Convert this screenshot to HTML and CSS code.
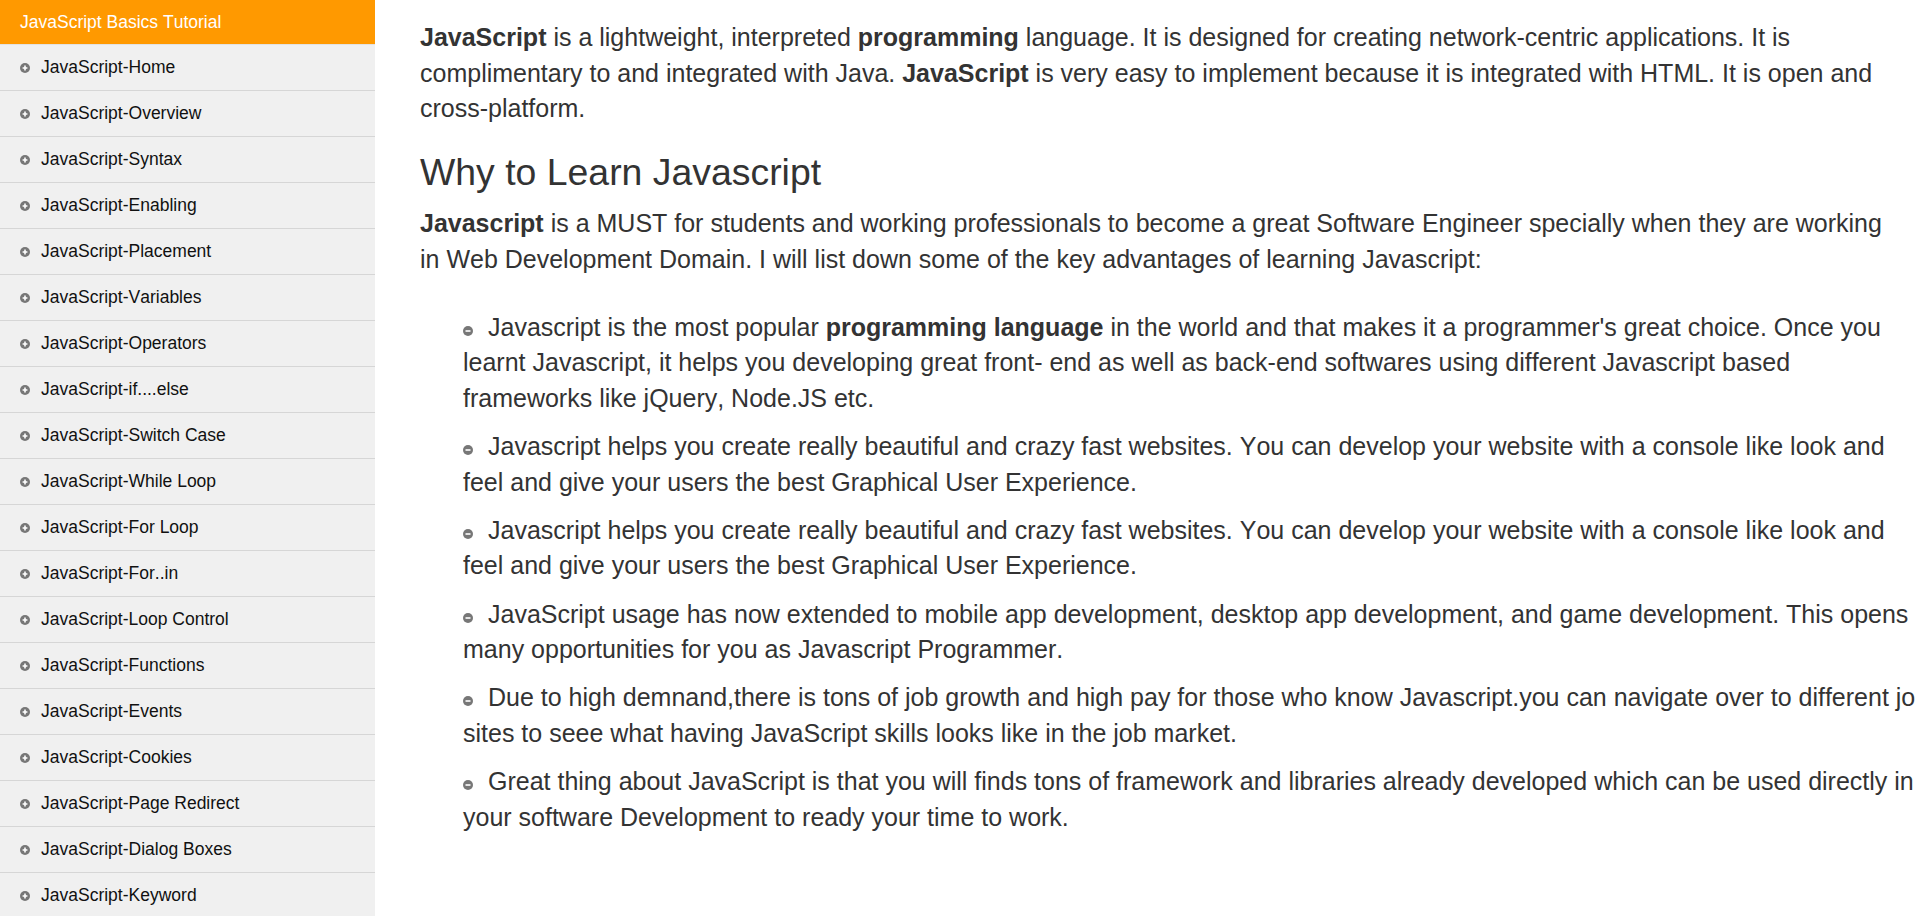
FILE: index.html
```html
<!DOCTYPE html>
<html lang="en">
<head>
<meta charset="utf-8">
<title>JavaScript Basics Tutorial</title>
<link rel="stylesheet" href="styles.css">
</head>
<body>
<aside class="sidebar">
  <div class="sidebar-title">JavaScript Basics Tutorial</div>
  <ul class="nav">
    <li class="nav-item"><svg class="nav-icon" viewBox="0 0 10 10"><circle cx="5" cy="5" r="5" fill="#777"/><path d="M2.6 5h4.8M5 2.6v4.8" stroke="#fff" stroke-width="1.6"/></svg>JavaScript-Home</li>
    <li class="nav-item"><svg class="nav-icon" viewBox="0 0 10 10"><circle cx="5" cy="5" r="5" fill="#777"/><path d="M2.6 5h4.8M5 2.6v4.8" stroke="#fff" stroke-width="1.6"/></svg>JavaScript-Overview</li>
    <li class="nav-item"><svg class="nav-icon" viewBox="0 0 10 10"><circle cx="5" cy="5" r="5" fill="#777"/><path d="M2.6 5h4.8M5 2.6v4.8" stroke="#fff" stroke-width="1.6"/></svg>JavaScript-Syntax</li>
    <li class="nav-item"><svg class="nav-icon" viewBox="0 0 10 10"><circle cx="5" cy="5" r="5" fill="#777"/><path d="M2.6 5h4.8M5 2.6v4.8" stroke="#fff" stroke-width="1.6"/></svg>JavaScript-Enabling</li>
    <li class="nav-item"><svg class="nav-icon" viewBox="0 0 10 10"><circle cx="5" cy="5" r="5" fill="#777"/><path d="M2.6 5h4.8M5 2.6v4.8" stroke="#fff" stroke-width="1.6"/></svg>JavaScript-Placement</li>
    <li class="nav-item"><svg class="nav-icon" viewBox="0 0 10 10"><circle cx="5" cy="5" r="5" fill="#777"/><path d="M2.6 5h4.8M5 2.6v4.8" stroke="#fff" stroke-width="1.6"/></svg>JavaScript-Variables</li>
    <li class="nav-item"><svg class="nav-icon" viewBox="0 0 10 10"><circle cx="5" cy="5" r="5" fill="#777"/><path d="M2.6 5h4.8M5 2.6v4.8" stroke="#fff" stroke-width="1.6"/></svg>JavaScript-Operators</li>
    <li class="nav-item"><svg class="nav-icon" viewBox="0 0 10 10"><circle cx="5" cy="5" r="5" fill="#777"/><path d="M2.6 5h4.8M5 2.6v4.8" stroke="#fff" stroke-width="1.6"/></svg>JavaScript-if....else</li>
    <li class="nav-item"><svg class="nav-icon" viewBox="0 0 10 10"><circle cx="5" cy="5" r="5" fill="#777"/><path d="M2.6 5h4.8M5 2.6v4.8" stroke="#fff" stroke-width="1.6"/></svg>JavaScript-Switch Case</li>
    <li class="nav-item"><svg class="nav-icon" viewBox="0 0 10 10"><circle cx="5" cy="5" r="5" fill="#777"/><path d="M2.6 5h4.8M5 2.6v4.8" stroke="#fff" stroke-width="1.6"/></svg>JavaScript-While Loop</li>
    <li class="nav-item"><svg class="nav-icon" viewBox="0 0 10 10"><circle cx="5" cy="5" r="5" fill="#777"/><path d="M2.6 5h4.8M5 2.6v4.8" stroke="#fff" stroke-width="1.6"/></svg>JavaScript-For Loop</li>
    <li class="nav-item"><svg class="nav-icon" viewBox="0 0 10 10"><circle cx="5" cy="5" r="5" fill="#777"/><path d="M2.6 5h4.8M5 2.6v4.8" stroke="#fff" stroke-width="1.6"/></svg>JavaScript-For..in</li>
    <li class="nav-item"><svg class="nav-icon" viewBox="0 0 10 10"><circle cx="5" cy="5" r="5" fill="#777"/><path d="M2.6 5h4.8M5 2.6v4.8" stroke="#fff" stroke-width="1.6"/></svg>JavaScript-Loop Control</li>
    <li class="nav-item"><svg class="nav-icon" viewBox="0 0 10 10"><circle cx="5" cy="5" r="5" fill="#777"/><path d="M2.6 5h4.8M5 2.6v4.8" stroke="#fff" stroke-width="1.6"/></svg>JavaScript-Functions</li>
    <li class="nav-item"><svg class="nav-icon" viewBox="0 0 10 10"><circle cx="5" cy="5" r="5" fill="#777"/><path d="M2.6 5h4.8M5 2.6v4.8" stroke="#fff" stroke-width="1.6"/></svg>JavaScript-Events</li>
    <li class="nav-item"><svg class="nav-icon" viewBox="0 0 10 10"><circle cx="5" cy="5" r="5" fill="#777"/><path d="M2.6 5h4.8M5 2.6v4.8" stroke="#fff" stroke-width="1.6"/></svg>JavaScript-Cookies</li>
    <li class="nav-item"><svg class="nav-icon" viewBox="0 0 10 10"><circle cx="5" cy="5" r="5" fill="#777"/><path d="M2.6 5h4.8M5 2.6v4.8" stroke="#fff" stroke-width="1.6"/></svg>JavaScript-Page Redirect</li>
    <li class="nav-item"><svg class="nav-icon" viewBox="0 0 10 10"><circle cx="5" cy="5" r="5" fill="#777"/><path d="M2.6 5h4.8M5 2.6v4.8" stroke="#fff" stroke-width="1.6"/></svg>JavaScript-Dialog Boxes</li>
    <li class="nav-item"><svg class="nav-icon" viewBox="0 0 10 10"><circle cx="5" cy="5" r="5" fill="#777"/><path d="M2.6 5h4.8M5 2.6v4.8" stroke="#fff" stroke-width="1.6"/></svg>JavaScript-Keyword</li>
  </ul>
</aside>
<main class="content">
  <p class="intro"><b>JavaScript</b> is a lightweight, interpreted <b>programming</b> language. It is designed for creating network-centric applications. It is complimentary to and integrated with Java. <b>JavaScript</b> is very easy to implement because it is integrated with HTML. It is open and <span class="nowrap">cross-platform.</span></p>
  <h2 class="section-title">Why to Learn Javascript</h2>
  <p><b>Javascript</b> is a MUST for students and working professionals to become a great Software Engineer specially when they are working in Web Development Domain. I will list down some of the key advantages of learning Javascript:</p>
  <ul class="features">
    <li class="feature-first"><svg class="bullet" viewBox="0 0 10 10"><circle cx="5" cy="5" r="5" fill="#777"/><path d="M2.5 5h5" stroke="#fff" stroke-width="1.6"/></svg>Javascript is the most popular <b>programming language</b> in the world and that makes it a programmer's great choice. Once you learnt Javascript, it helps you developing great front- end as well as <span class="nowrap">back-end</span> softwares using different Javascript based frameworks like jQuery, Node.JS etc.</li>
    <li><svg class="bullet" viewBox="0 0 10 10"><circle cx="5" cy="5" r="5" fill="#777"/><path d="M2.5 5h5" stroke="#fff" stroke-width="1.6"/></svg>Javascript helps you create really beautiful and crazy fast websites. You can develop your website with a console like look and feel and give your users the best Graphical User Experience.</li>
    <li><svg class="bullet" viewBox="0 0 10 10"><circle cx="5" cy="5" r="5" fill="#777"/><path d="M2.5 5h5" stroke="#fff" stroke-width="1.6"/></svg>Javascript helps you create really beautiful and crazy fast websites. You can develop your website with a console like look and feel and give your users the best Graphical User Experience.</li>
    <li><svg class="bullet" viewBox="0 0 10 10"><circle cx="5" cy="5" r="5" fill="#777"/><path d="M2.5 5h5" stroke="#fff" stroke-width="1.6"/></svg>JavaScript usage has now extended to mobile app development, desktop app development, and game development. This opens many opportunities for you as Javascript Programmer.</li>
    <li><svg class="bullet" viewBox="0 0 10 10"><circle cx="5" cy="5" r="5" fill="#777"/><path d="M2.5 5h5" stroke="#fff" stroke-width="1.6"/></svg>Due to high demnand,there is tons of job growth and high pay for those who know Javascript.you can navigate over to different job sites to seee what having JavaScript skills looks like in the job market.</li>
    <li><svg class="bullet" viewBox="0 0 10 10"><circle cx="5" cy="5" r="5" fill="#777"/><path d="M2.5 5h5" stroke="#fff" stroke-width="1.6"/></svg>Great thing about JavaScript is that you will finds tons of framework and libraries already developed which can be used directly in your software Development to ready your time to work.</li>
  </ul>
</main>
</body>
</html>
```

FILE: styles.css
```css
html {
  overflow: hidden;
}

body {
  margin: 0;
  font-family: "Liberation Sans", Arial, sans-serif;
  font-kerning: none;
  display: flex;
  align-items: flex-start;
  background: #fff;
}

.sidebar {
  flex: none;
  width: 375px;
  background: #f0f0f0;
}

.sidebar-title {
  height: 44px;
  display: flex;
  align-items: center;
  padding-left: 20px;
  background: #ff9900;
  color: #fff;
  font-size: 17.5px;
}

.nav {
  list-style: none;
  margin: 0;
  padding: 0;
}

.nav-item {
  height: 45px;
  display: flex;
  align-items: center;
  gap: 11px;
  padding-left: 20px;
  border-top: 1px solid #d6d6d6;
  font-size: 17.5px;
  color: #111;
}

.nav-item:first-child {
  border-top-color: #e2e2e2;
}

.nav-icon {
  width: 10px;
  height: 10px;
  flex: none;
}

.content {
  flex: none;
  width: 1495px;
  overflow: hidden;
  padding-left: 45px;
  padding-top: 20px;
  color: #333;
  font-size: 25px;
  line-height: 35.5px;
}

.content p {
  margin: 0;
  max-width: 1480px;
}

.content .intro {
  margin-bottom: 25px;
}

.nowrap {
  white-space: nowrap;
}

.section-title {
  margin: 0 0 14px;
  font-size: 37.4px;
  font-weight: normal;
  line-height: 40.7px;
}

.features {
  list-style: none;
  margin: 32.5px -16px 0 0;
  padding-left: 43px;
}

.features li {
  margin-bottom: 12.8px;
}

.features .feature-first {
  max-width: 1447px;
}

.bullet {
  display: inline-block;
  width: 10px;
  height: 10px;
  margin-right: 15px;
  vertical-align: 0;
}
```
